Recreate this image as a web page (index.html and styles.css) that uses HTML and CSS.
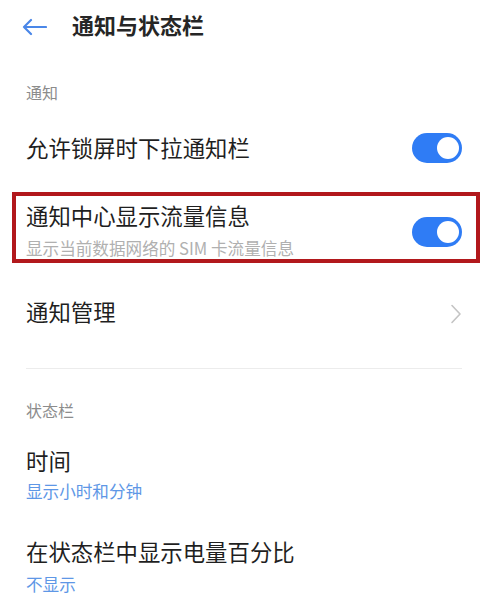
FILE: index.html
```html
<!DOCTYPE html>
<html lang="zh-CN">
<head>
<meta charset="utf-8">
<link rel="stylesheet" href="styles.css">
</head>
<body>
<div class="page">
  <header class="topbar">
    <svg class="back" width="26" height="18" viewBox="0 0 26 18">
      <path d="M25 9H3M10 2L3 9L10 16" fill="none" stroke="#4a87e8" stroke-width="2.2" stroke-linecap="round" stroke-linejoin="round"/>
    </svg>
    <h1 class="title">通知与状态栏</h1>
  </header>

  <div class="list">
    <div class="section-label first">通知</div>

    <div class="row row-1">
      <div class="row-text"><div class="item-title">允许锁屏时下拉通知栏</div></div>
      <div class="toggle up"><span class="knob"></span></div>
    </div>

    <div class="row highlight">
      <div class="row-text">
        <div class="item-title">通知中心显示流量信息</div>
        <div class="item-sub gray">显示当前数据网络的 SIM 卡流量信息</div>
      </div>
      <div class="toggle down"><span class="knob"></span></div>
    </div>

    <div class="row row-manage">
      <div class="row-text"><div class="item-title">通知管理</div></div>
      <svg class="chevron" width="12" height="20" viewBox="0 0 12 20">
        <path d="M2 1.5L10 10L2 18.5" fill="none" stroke="#c4c4c4" stroke-width="1.6" stroke-linecap="round" stroke-linejoin="round"/>
      </svg>
    </div>

    <div class="divider"></div>

    <div class="section-label second">状态栏</div>

    <div class="item item-time">
      <div class="item-title">时间</div>
      <div class="item-sub blue">显示小时和分钟</div>
    </div>

    <div class="item item-battery">
      <div class="item-title">在状态栏中显示电量百分比</div>
      <div class="item-sub blue">不显示</div>
    </div>
  </div>
</div>
</body>
</html>
```

FILE: styles.css
```css
* { box-sizing: border-box; margin: 0; padding: 0; }

html, body {
  background: #ffffff;
}

body {
  font-family: "Noto Sans CJK SC", "Noto Sans", sans-serif;
  color: #222222;
  width: 483px;
  overflow: hidden;
}

.topbar {
  height: 54px;
  display: flex;
  align-items: center;
  padding-left: 21px;
}

.back {
  display: block;
}

.title {
  margin-left: 25px;
  margin-bottom: 6px;
  font-size: 22px;
  line-height: 28px;
  font-weight: 700;
  color: #262626;
}

.list {
  padding: 0 21px 0 26px;
}

.section-label {
  font-size: 16px;
  line-height: 20px;
  color: #8c8c8c;
}

.section-label.first { margin-top: 28px; }
.section-label.second { margin-top: 31px; }

.row {
  display: flex;
  align-items: center;
  justify-content: space-between;
}

.row-1 {
  margin-top: 23px;
  height: 44px;
}

.item-title {
  font-size: 22.4px;
  line-height: 28px;
  color: #1f1f1f;
}

.item-sub {
  font-size: 16.6px;
  line-height: 20px;
  margin-top: 7px;
}

.item-sub.gray { color: #b0b0b0; }
.item-sub.blue { color: #5e97e6; }

.highlight {
  margin: 23px -18px 0 -14px;
  border: 4px solid #b2181c;
  padding: 5px 14px 0 10px;
  height: 71px;
  align-items: flex-start;
}

.highlight .item-sub {
  margin-top: 9px;
}

.highlight .toggle {
  margin-top: 16px;
}

.toggle {
  width: 50px;
  height: 30px;
  border-radius: 15px;
  background: #2f7cf5;
  display: flex;
  align-items: center;
  justify-content: flex-end;
  padding-right: 3px;
  flex-shrink: 0;
}

.toggle.up { margin-top: 2px; }

.knob {
  width: 22px;
  height: 22px;
  border-radius: 50%;
  background: #ffffff;
}

.row-manage {
  margin-top: 26px;
  height: 44px;
}

.chevron {
  display: block;
  margin-top: 6px;
}

.divider {
  margin-top: 35px;
  height: 1px;
  background: #ececec;
}

.item-time { margin-top: 26px; }
.item-battery { margin-top: 36px; }
.item-battery .item-sub { margin-top: 9px; }
```
